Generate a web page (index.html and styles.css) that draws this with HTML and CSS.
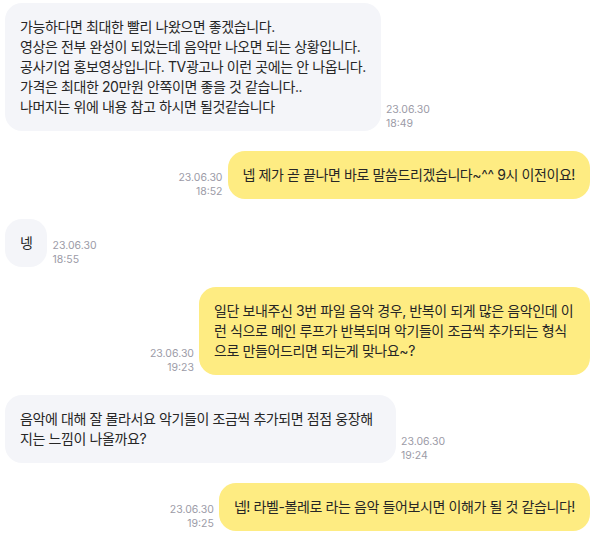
FILE: index.html
```html
<!DOCTYPE html>
<html lang="ko">
<head>
<meta charset="utf-8">
<link rel="stylesheet" href="styles.css">
</head>
<body>
<div class="chat">
  <div class="row in">
    <div class="bubble gray lines">가능하다면 최대한 빨리 나왔으면 좋겠습니다.
영상은 전부 완성이 되었는데 음악만 나오면 되는 상황입니다.
공사기업 홍보영상입니다. TV광고나 이런 곳에는 안 나옵니다.
가격은 최대한 20만원 안쪽이면 좋을 것 같습니다..
나머지는 위에 내용 참고 하시면 될것같습니다</div>
    <div class="time">23.06.30<br>18:49</div>
  </div>
  <div class="row out">
    <div class="time">23.06.30<br>18:52</div>
    <div class="bubble yellow">넵 제가 곧 끝나면 바로 말씀드리겠습니다~^^ 9시 이전이요!</div>
  </div>
  <div class="row in">
    <div class="bubble gray">넹</div>
    <div class="time">23.06.30<br>18:55</div>
  </div>
  <div class="row out">
    <div class="time">23.06.30<br>19:23</div>
    <div class="bubble yellow">일단 보내주신 3번 파일 음악 경우, 반복이 되게 많은 음악인데 이런 식으로 메인 루프가 반복되며 악기들이 조금씩 추가되는 형식으로 만들어드리면 되는게 맞나요~?</div>
  </div>
  <div class="row in">
    <div class="bubble gray">음악에 대해 잘 몰라서요 악기들이 조금씩 추가되면 점점 웅장해지는 느낌이 나올까요?</div>
    <div class="time">23.06.30<br>19:24</div>
  </div>
  <div class="row out">
    <div class="time">23.06.30<br>19:25</div>
    <div class="bubble yellow">넵! 라벨-볼레로 라는 음악 들어보시면 이해가 될 것 같습니다!</div>
  </div>
</div>
</body>
</html>
```
FILE: styles.css
```css
html, body {
  margin: 0;
  padding: 0;
  background: #ffffff;
}
body {
  font-family: Inter, "Noto Sans CJK KR", sans-serif;
  color: #262626;
}
.chat {
  display: flex;
  flex-direction: column;
  gap: 20px;
  padding: 3px 11px 0 5px;
}
.row {
  display: flex;
  align-items: flex-end;
  gap: 5px;
}
.row.out {
  justify-content: flex-end;
}
.bubble {
  max-width: 361px;
  padding: 14px 15px;
  border-radius: 17px;
  font-size: 14px;
  line-height: 20px;
  letter-spacing: -0.4px;
}
.bubble.lines {
  white-space: pre-line;
  max-width: none;
}
.gray {
  background: #f4f5f9;
}
.yellow {
  background: #feec82;
}
.time {
  font-size: 10.5px;
  line-height: 14px;
  color: #9c9ba7;
  white-space: nowrap;
}
.out .time {
  text-align: right;
}
```
